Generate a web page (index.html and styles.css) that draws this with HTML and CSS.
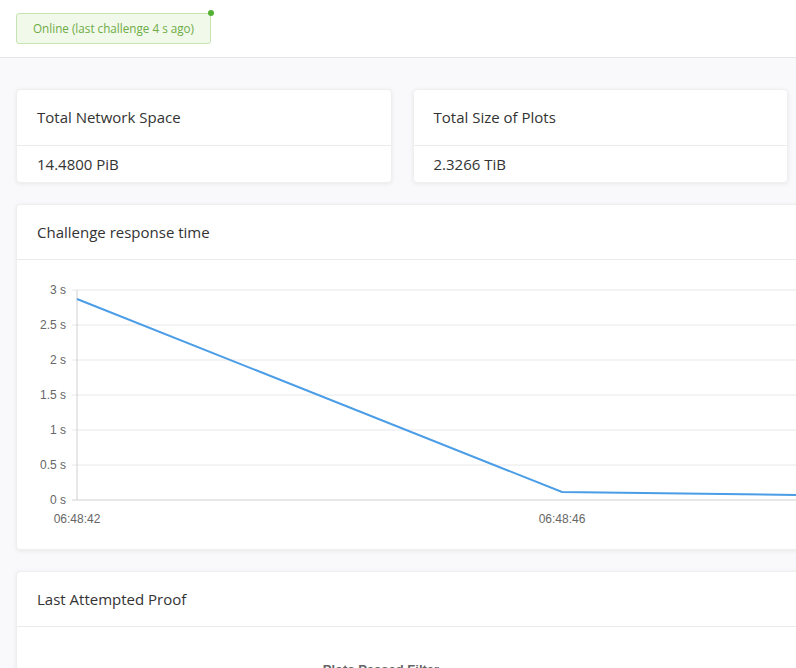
FILE: index.html
```html
<!DOCTYPE html>
<html lang="en">
  <head>
    <meta charset="utf-8" />
    <meta name="viewport" content="width=device-width, initial-scale=1" />
    <title>farmer status</title>
    <link rel="stylesheet" href="styles.css">
  </head>
  <body>
    <header class="topbar">
      <span class="status">Online (last challenge 4 s ago)<i class="status-dot"></i></span>
    </header>
    <main class="main">
      <section class="stats">
        <div class="card">
          <h2 class="card-title">Total Network Space</h2>
          <p class="card-value">14.4800 PiB</p>
        </div>
        <div class="card">
          <h2 class="card-title">Total Size of Plots</h2>
          <p class="card-value">2.3266 TiB</p>
        </div>
      </section>

      <section class="card card-wide">
        <h2 class="card-title">Challenge response time</h2>
        <svg class="chart" width="1000" height="289" viewBox="0 0 1000 289">
          <g class="grid">
            <line x1="55" y1="30" x2="1000" y2="30" />
            <line x1="55" y1="65" x2="1000" y2="65" />
            <line x1="55" y1="100" x2="1000" y2="100" />
            <line x1="55" y1="135" x2="1000" y2="135" />
            <line x1="55" y1="170" x2="1000" y2="170" />
            <line x1="55" y1="205" x2="1000" y2="205" />
          </g>
          <line class="axis" x1="60" y1="30" x2="60" y2="240" />
          <line class="axis" x1="55" y1="240" x2="1000" y2="240" />
          <g class="ylabels">
            <text x="49" y="34">3 s</text>
            <text x="49" y="69">2.5 s</text>
            <text x="49" y="104">2 s</text>
            <text x="49" y="139">1.5 s</text>
            <text x="49" y="174">1 s</text>
            <text x="49" y="209">0.5 s</text>
            <text x="49" y="244">0 s</text>
          </g>
          <g class="xlabels">
            <text x="60" y="263">06:48:42</text>
            <text x="545" y="263">06:48:46</text>
          </g>
          <polyline class="series" points="60,39 545,232 779,235 1000,236" />
        </svg>
      </section>

      <section class="card card-wide">
        <h2 class="card-title">Last Attempted Proof</h2>
        <div class="proof">
          <span class="proof-label">Plots Passed Filter</span>
        </div>
      </section>
    </main>
  </body>
</html>
```

FILE: styles.css
```css
html,
body {
  overflow-x: hidden;
}

body {
  margin: 0;
  background-color: #f9f9fb;
  color: #333;
  font-family: "Open Sans", "Noto Sans", sans-serif;
}

.topbar {
  height: 58px;
  background-color: #fff;
  border-bottom: 1px solid #e6e6e6;
  padding: 13px 16px 0;
  box-sizing: border-box;
}

.status {
  position: relative;
  display: inline-block;
  height: 31px;
  line-height: 29px;
  box-sizing: border-box;
  padding: 0 16px;
  font-size: 11.7px;
  color: #6eac45;
  background-color: #f1f9eb;
  border: 1px solid #c6e4b0;
  border-radius: 3px;
}

.status-dot {
  position: absolute;
  top: -4px;
  right: -4px;
  width: 6px;
  height: 6px;
  border-radius: 50%;
  background-color: #52b135;
}

.main {
  padding: 31px 8px 0 16px;
}

.stats {
  display: flex;
  gap: 21px;
  margin-bottom: 21px;
}

.stats .card {
  flex: 1;
}

.card {
  background-color: #fff;
  border: 1px solid #efefef;
  border-radius: 4px;
  box-shadow: 0 1px 5px rgba(0, 0, 0, 0.07);
}

.card-wide {
  width: 1000px;
  margin-bottom: 21px;
}

.card-title {
  margin: 0;
  height: 55px;
  line-height: 55px;
  padding: 0 20px;
  font-size: 15px;
  font-weight: normal;
  border-bottom: 1px solid #ebebeb;
}

.card-wide .card-title {
  height: 54px;
  line-height: 54px;
}

.card-value {
  margin: 0;
  height: 36px;
  line-height: 36px;
  padding: 0 20px;
  font-size: 15px;
}

.chart {
  display: block;
  font-family: "Liberation Sans", Arial, sans-serif;
  font-size: 12px;
}

.chart .grid line {
  stroke: #e8e8e8;
  stroke-width: 1;
}

.chart .axis {
  stroke: #d0d0d0;
  stroke-width: 1;
}

.chart text {
  fill: #666;
}

.ylabels text {
  text-anchor: end;
}

.xlabels text {
  text-anchor: middle;
}

.series {
  fill: none;
  stroke: #4a9de6;
  stroke-width: 2;
}

.proof {
  height: 120px;
  padding-top: 30px;
  box-sizing: border-box;
  width: 728px;
  text-align: center;
}

.proof-label {
  font-family: "Liberation Sans", Arial, sans-serif;
  font-size: 13px;
  font-weight: bold;
  color: #666;
}
```
